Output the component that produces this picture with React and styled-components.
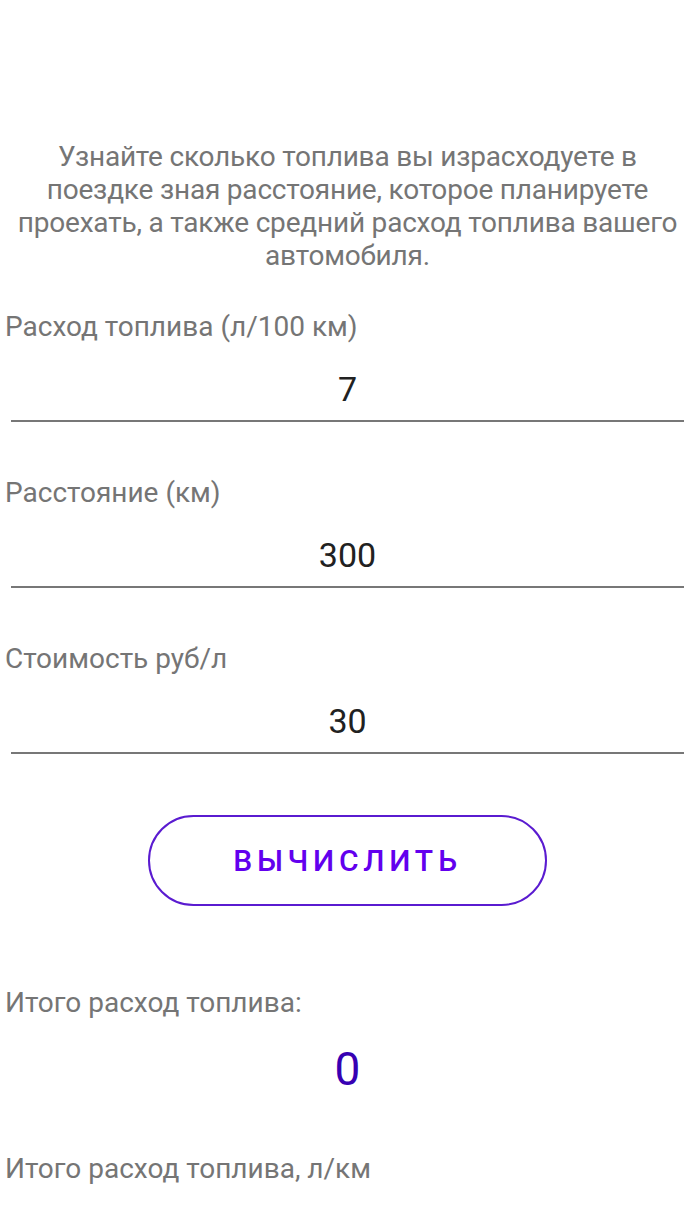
import React, { useState } from 'react';
import styled, { createGlobalStyle } from 'styled-components';

const GlobalStyle = createGlobalStyle`
  body {
    margin: 0;
    background: #fff;
    font-family: Roboto, 'Noto Sans', sans-serif;
  }
`;

const Page = styled.div`
  display: flex;
  flex-direction: column;
  padding: 140px 0 0 5px;
  width: 684px;
  box-sizing: border-box;
`;

const Intro = styled.p`
  margin: 0 0 0 6px;
  font-size: 28px;
  line-height: 33px;
  color: #757575;
  text-align: center;
  letter-spacing: -0.2px;
  white-space: nowrap;
`;

const Field = styled.div`
  display: flex;
  flex-direction: column;
  margin-top: ${(p) => p.top}px;
`;

const Label = styled.div`
  font-size: 28px;
  line-height: 33px;
  color: #757575;
`;

const Input = styled.input`
  margin: 26px 0 0 6px;
  border: none;
  border-bottom: 2px solid #777;
  padding: 0 0 11px;
  font-family: Roboto, sans-serif;
  font-size: 34px;
  line-height: 40px;
  height: 40px;
  color: #212121;
  text-align: center;
  outline: none;
  background: transparent;
`;

const ButtonRow = styled.div`
  display: flex;
  justify-content: center;
  margin: 61px 0 0 6px;
`;

const Button = styled.button`
  width: 399px;
  height: 91px;
  border: 2px solid #5a1bd0;
  border-radius: 46px;
  background: #fff;
  color: #6200ee;
  font-family: Roboto, sans-serif;
  font-weight: 500;
  font-size: 30px;
  letter-spacing: 4.8px;
  text-transform: uppercase;
  cursor: pointer;
`;

const Result = styled.div`
  margin: 22px 0 0 6px;
  font-size: 46px;
  line-height: 56px;
  color: #3700b3;
  text-align: center;
`;

const fields = [
  { label: 'Расход топлива (л/100 км)', value: '7', top: 38 },
  { label: 'Расстояние (км)', value: '300', top: 54 },
  { label: 'Стоимость руб/л', value: '30', top: 54 },
];

export default function App() {
  const [values, setValues] = useState(fields.map((f) => f.value));

  return (
    <Page>
      <GlobalStyle />
      <Intro>
        Узнайте сколько топлива вы израсходуете в<br />
        поездке зная расстояние, которое планируете<br />
        проехать, а также средний расход топлива вашего<br />
        автомобиля.
      </Intro>
      {fields.map((f, i) => (
        <Field key={f.label} top={f.top}>
          <Label>{f.label}</Label>
          <Input
            value={values[i]}
            onChange={(e) => {
              const next = [...values];
              next[i] = e.target.value;
              setValues(next);
            }}
          />
        </Field>
      ))}
      <ButtonRow>
        <Button>Вычислить</Button>
      </ButtonRow>
      <Field top={80}>
        <Label>Итого расход топлива:</Label>
        <Result>0</Result>
      </Field>
      <Field top={55}>
        <Label>Итого расход топлива, л/км</Label>
      </Field>
    </Page>
  );
}
